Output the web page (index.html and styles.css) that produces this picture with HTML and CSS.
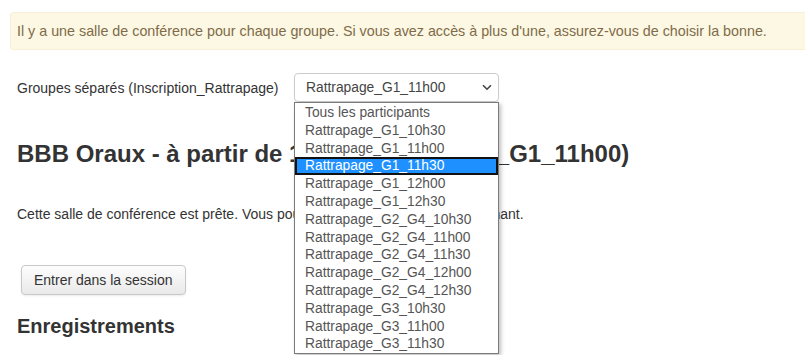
FILE: index.html
```html
<!DOCTYPE html>
<html lang="fr">
<head>
  <meta charset="UTF-8" />
  <meta name="viewport" content="width=device-width, initial-scale=1.0"/>
  <title>BBB Oraux</title>
  <link rel="stylesheet" href="styles.css">
</head>
<body>
  <div class="page">
    <div class="alert">Il y a une salle de conférence pour chaque groupe. Si vous avez accès à plus d'une, assurez-vous de choisir la bonne.</div>

    <div class="content">
      <div class="group-row">
        <label class="group-label" for="groupSelect">Groupes séparés (Inscription_Rattrapage)</label>
        <div class="group-picker">
          <div class="select" id="groupSelect">
            <span>Rattrapage_G1_11h00</span>
            <svg class="chevron" width="10" height="7" viewBox="0 0 10 7"><path d="M1 1.2 L5 5.2 L9 1.2" fill="none" stroke="#444" stroke-width="1.6"/></svg>
          </div>
          <ul class="options">
            <li>Tous les participants</li>
            <li>Rattrapage_G1_10h30</li>
            <li>Rattrapage_G1_11h00</li>
            <li class="active">Rattrapage_G1_11h30</li>
            <li>Rattrapage_G1_12h00</li>
            <li>Rattrapage_G1_12h30</li>
            <li>Rattrapage_G2_G4_10h30</li>
            <li>Rattrapage_G2_G4_11h00</li>
            <li>Rattrapage_G2_G4_11h30</li>
            <li>Rattrapage_G2_G4_12h00</li>
            <li>Rattrapage_G2_G4_12h30</li>
            <li>Rattrapage_G3_10h30</li>
            <li>Rattrapage_G3_11h00</li>
            <li>Rattrapage_G3_11h30</li>
          </ul>
        </div>
      </div>

      <h2 class="room-title">BBB Oraux - à partir de 11h00 (Rattrapage_G1_11h00)</h2>

      <p class="room-status">Cette salle de conférence est prête. Vous pouvez rejoindre la session maintenant.</p>

      <button class="btn">Entrer dans la session</button>

      <h3 class="recordings">Enregistrements</h3>
    </div>
  </div>
</body>
</html>
```

FILE: styles.css
```css
body {
  font-family: 'Liberation Sans', Arial, sans-serif;
  font-size: 14px;
  color: #333;
  background: #fff;
  margin: 0;
}
.page {
  box-sizing: border-box;
  height: 355px;
  overflow: hidden;
  padding: 12px 0 0 10px;
}
.alert {
  background: #fcf8e3;
  border: 1px solid #f8efd6;
  border-right: none;
  border-radius: 4px 0 0 4px;
  color: #7f6b4a;
  padding: 11px 7px 11px 6px;
  line-height: 14px;
  font-size: 14.3px;
  white-space: nowrap;
}
.content {
  padding-left: 7px;
}
.group-row {
  display: flex;
  align-items: center;
  margin-top: 23px;
}
.group-label {
  width: 277px;
}
.group-picker {
  position: relative;
}
.select {
  box-sizing: border-box;
  width: 205px;
  height: 29px;
  border: 1px solid #ccc;
  border-radius: 4px;
  display: flex;
  align-items: center;
  justify-content: space-between;
  padding: 0 6px 0 11px;
  font-size: 13.8px;
  color: #444;
  box-shadow: 0 1px 2px rgba(0,0,0,0.06);
}
.options {
  position: absolute;
  top: 29px;
  left: 0;
  z-index: 2;
  box-sizing: border-box;
  width: 205px;
  margin: 0;
  padding: 1px 0 0;
  list-style: none;
  background: #fff;
  border: 1px solid #7a7a7a;
  box-shadow: 2px 2px 4px rgba(0,0,0,0.25);
  font-size: 13.8px;
  color: #555;
}
.options li {
  line-height: 17.8px;
  padding-left: 8px;
  border: 2px solid transparent;
  border-top: none;
  border-bottom: none;
}
.options li.active {
  background: #1e90ff;
  color: #fff;
  border: 2px solid #111;
  line-height: 13.8px;
  padding-left: 8px;
}
.room-title {
  font-size: 24px;
  font-weight: bold;
  margin: 38px 0 0;
  line-height: 28px;
  white-space: nowrap;
}
.room-status {
  margin: 38px 0 0;
  line-height: 16px;
  white-space: nowrap;
}
.btn {
  margin: 43px 0 0 4px;
  height: 30px;
  padding: 0 12px;
  font-family: inherit;
  font-size: 14px;
  color: #333;
  background: linear-gradient(#fdfdfd, #e9e9e9);
  border: 1px solid #c8c8c8;
  border-radius: 4px;
  box-shadow: 0 1px 2px rgba(0,0,0,0.08);
}
.recordings {
  font-size: 20px;
  font-weight: bold;
  margin: 19px 0 0;
  line-height: 24px;
}
```
